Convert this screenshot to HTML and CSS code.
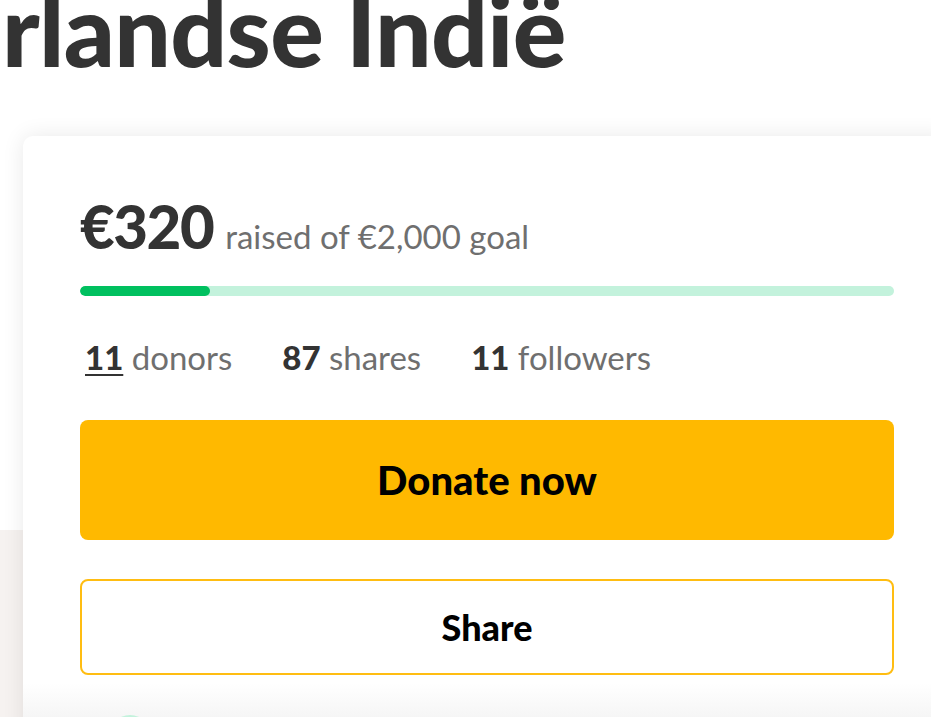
FILE: index.html
```html
<!DOCTYPE html>
<html lang="nl">
<head>
<meta charset="utf-8">
<title>Nederlandse Indië</title>
<link rel="stylesheet" href="styles.css">
</head>
<body>
<header class="title-wrap">
  <h1 class="title">rlandse Indië</h1>
</header>
<main class="layout">
  <aside class="side">
    <div class="side-panel"></div>
  </aside>
  <section class="card">
    <div class="amount">
      <span class="raised">€320</span>
      <span class="goal">raised of €2,000 goal</span>
    </div>
    <div class="progress"><div class="progress-fill" style="width:16%"></div></div>
    <ul class="stats">
      <li><a class="stat-num link" href="#">11</a> donors</li>
      <li><span class="stat-num">87</span> shares</li>
      <li><span class="stat-num">11</span> followers</li>
    </ul>
    <button class="btn btn-donate">Donate now</button>
    <button class="btn btn-share">Share</button>
    <div class="recent">
      <div class="avatar"></div>
    </div>
  </section>
</main>
</body>
</html>
```

FILE: styles.css
```css
html, body {
  margin: 0;
  padding: 0;
  background: #ffffff;
  overflow: hidden;
  height: 717px;
}
body {
  font-family: "Lato", "Liberation Sans", sans-serif;
  color: #333333;
}
.title-wrap {
  height: 136px;
  overflow: hidden;
}
.title {
  margin: -22px 0 0 2px;
  font-size: 100px;
  line-height: 1;
  font-weight: 900;
  color: #333333;
  white-space: nowrap;
  letter-spacing: -0.7px;
}
.layout {
  display: flex;
  align-items: flex-start;
}
.side {
  flex: 0 0 23px;
  padding-top: 394px;
}
.side-panel {
  height: 300px;
  background: #f6f2f0;
}
.card {
  flex: 0 0 928px;
  box-sizing: border-box;
  background: #ffffff;
  border-radius: 10px;
  box-shadow: 0 0 22px rgba(0, 0, 0, 0.09);
  padding: 61px 57px 0 57px;
  height: 640px;
  overflow: hidden;
}
.amount {
  display: flex;
  align-items: baseline;
  gap: 12px;
  height: 58px;
}
.raised {
  font-size: 60px;
  font-weight: 900;
  line-height: 58px;
  letter-spacing: -1.5px;
  color: #333333;
}
.goal {
  font-size: 33px;
  color: #6f6f6f;
}
.progress {
  margin-top: 31px;
  height: 10px;
  border-radius: 5px;
  background: #c3f2dc;
  overflow: hidden;
}
.progress-fill {
  height: 100%;
  border-radius: 5px;
  background: #00c05f;
}
.stats {
  list-style: none;
  margin: 36px 0 0 5px;
  padding: 0;
  display: flex;
  gap: 50px;
  font-size: 33px;
  line-height: 50px;
  color: #6f6f6f;
}
.stat-num {
  font-weight: 900;
  color: #333333;
}
.link {
  text-decoration: underline;
  text-decoration-thickness: 2px;
  text-underline-offset: 4px;
}
.btn {
  display: block;
  width: 100%;
  box-sizing: border-box;
  font-family: "Lato", "Liberation Sans", sans-serif;
  font-weight: 900;
  color: #000000;
  border-radius: 8px;
  cursor: pointer;
}
.btn-donate {
  margin-top: 38px;
  height: 120px;
  border: none;
  background: #ffb900;
  font-size: 40px;
}
.btn-share {
  margin-top: 39px;
  height: 96px;
  border: 2px solid #ffbd12;
  background: #ffffff;
  font-size: 36px;
}
.recent {
  margin: 8px -57px 0;
  padding: 32px 0 0 85px;
  height: 200px;
  background: linear-gradient(#ffffff, #f5f5f5 36px);
}
.avatar {
  width: 44px;
  height: 44px;
  border-radius: 50%;
  background: #c3f2dc;
}
```
